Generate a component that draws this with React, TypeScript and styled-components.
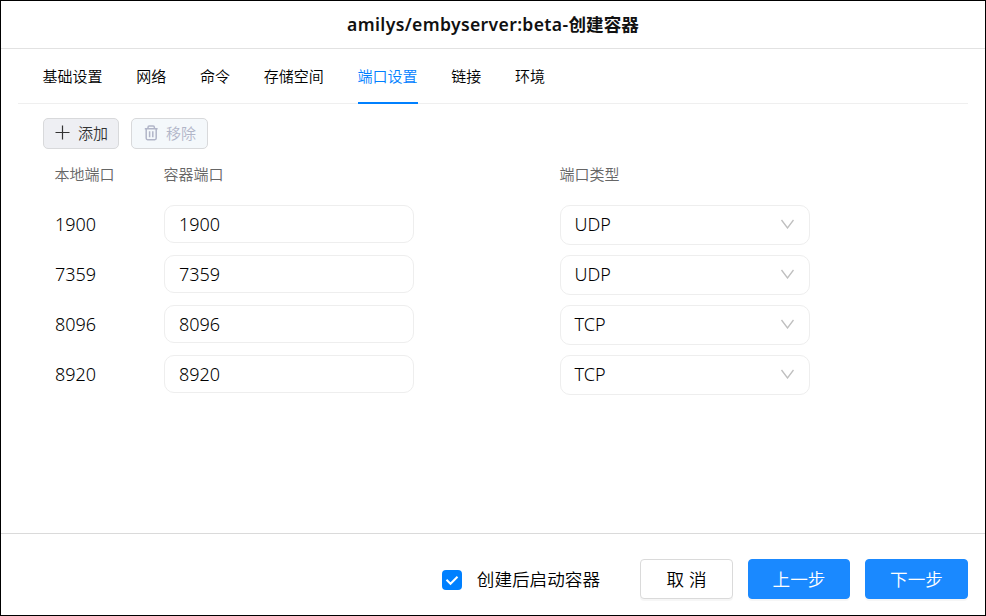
import React from 'react';
import styled, { createGlobalStyle } from 'styled-components';

const GlobalStyle = createGlobalStyle`
  * { box-sizing: border-box; }
  body {
    margin: 0;
    background: #fff;
    color: #000;
    font-family: "Noto Sans", "Noto Sans CJK SC", sans-serif;
  }
  button, input { font-family: inherit; }
`;

const cjk = '"Noto Sans CJK SC", sans-serif';

const Dialog = styled.div`
  width: 986px;
  height: 616px;
  border: 1px solid #000;
  display: flex;
  flex-direction: column;
  background: #fff;
  overflow: hidden;
`;

const Header = styled.header`
  height: 48px;
  flex: none;
  padding-bottom: 2px;
  display: flex;
  align-items: center;
  justify-content: center;
  border-bottom: 1px solid #e2e2e2;
`;

const Title = styled.h1`
  margin: 0;
  font-size: 17.6px;
  line-height: 24px;
  font-weight: 600;
  letter-spacing: 0.35px;
  color: #111;
  white-space: nowrap;
`;

const TitleCjk = styled.span`
  font-family: ${cjk};
  font-weight: 700;
  letter-spacing: 0;
`;

const TabBar = styled.nav`
  height: 55px;
  flex: none;
  margin: 0 17px;
  padding-left: 25px;
  display: flex;
  gap: 33.75px;
  border-bottom: 1px solid #efefef;
`;

const Tab = styled.a<{ $active: boolean }>`
  height: 55px;
  padding-top: 16px;
  font: 350 15px/22px ${cjk};
  white-space: nowrap;
  color: ${(p) => (p.$active ? '#0080ff' : '#000')};
  border-bottom: 2px solid ${(p) => (p.$active ? '#0080ff' : 'transparent')};
`;

const TabLabel = styled.span`
  margin: 0 0.6px 0 -0.6px;
`;

const Content = styled.main`
  flex: 1;
  padding: 14px 42px 0;
`;

const Toolbar = styled.div`
  display: flex;
  gap: 12px;
  height: 31px;
`;

const ToolButton = styled.button<{ $muted?: boolean }>`
  width: ${(p) => (p.$muted ? 77 : 76)}px;
  height: 31px;
  padding: 0 0 2px ${(p) => (p.$muted ? 12 : 11)}px;
  display: flex;
  align-items: center;
  gap: 8px;
  border: 1px solid #d8d9db;
  border-radius: 5px;
  background: ${(p) => (p.$muted ? '#f4f8fb' : '#eeeff3')};
  color: ${(p) => (p.$muted ? '#b1b5c8' : '#333')};
  font: 350 15px/22px ${cjk};
  white-space: nowrap;
  svg { flex: none; }
`;

const PortRow = styled.div`
  display: grid;
  grid-template-columns: 109px 396px 250px;
  height: 50px;
  padding-left: 12px;
  align-items: start;
`;

const HeadRow = styled(PortRow)`
  height: 56px;
  padding-top: 14px;
  font: 350 15px/22px ${cjk};
  text-indent: -0.6px;
  color: #666;
`;

const LocalPort = styled.span`
  font-size: 18px;
  font-weight: 350;
  line-height: 38px;
`;

const PortInput = styled.input`
  width: 250px;
  height: 38px;
  padding: 0 14px 1px;
  border: 1px solid #eee;
  border-radius: 10px;
  background: #fff;
  color: #000;
  font-size: 18px;
  font-weight: 350;
  outline: none;
`;

const TypeSelect = styled.div`
  width: 250px;
  height: 40px;
  padding: 0 15px 2px 13.5px;
  display: flex;
  align-items: center;
  justify-content: space-between;
  border: 1px solid #eee;
  border-radius: 10px;
  font-size: 18px;
  font-weight: 350;
`;

const Footer = styled.footer`
  height: 82px;
  flex: none;
  padding: 25px 17px 0 0;
  display: flex;
  justify-content: flex-end;
  border-top: 1px solid #dadada;
`;

const StartOption = styled.label`
  display: flex;
  align-items: center;
  height: 40px;
  margin: 1px 40px 0 0;
  gap: 15px;
  font: 350 17.6px/26px ${cjk};
  white-space: nowrap;
`;

const StartLabel = styled.span`
  padding-bottom: 2px;
`;

const CheckMark = styled.span`
  width: 20px;
  height: 20px;
  display: flex;
  border-radius: 4px;
  background: #0080ff;
`;

const ActionButton = styled.button<{ $primary?: boolean; $width: number }>`
  width: ${(p) => p.$width}px;
  height: 40px;
  padding: 0 0 1px;
  margin-left: ${(p) => (p.$primary ? 15 : 0)}px;
  border: 1px solid ${(p) => (p.$primary ? '#1a89ff' : '#dadada')};
  border-radius: 4px;
  background: ${(p) => (p.$primary ? '#1a89ff' : '#fff')};
  color: ${(p) => (p.$primary ? '#fff' : '#000')};
  box-shadow: 0 2px 0 rgba(0, 0, 0, 0.035);
  font: 350 17.6px/26px ${cjk};
  word-spacing: 1px;
  white-space: nowrap;
`;

const PlusIcon = () => (
  <svg width="15" height="15" viewBox="0 0 15 15" fill="none" stroke="currentColor" strokeWidth="1.2">
    <path d="M7.5 .5v14M.5 7.5h14" />
  </svg>
);

const TrashIcon = () => (
  <svg width="14" height="16" viewBox="0 0 14 16" fill="none" stroke="currentColor" strokeWidth="1.5">
    <path d="M.8 3.8h12.8M4 3.8V2.4q0-1.3 1.3-1.3h3.8q1.3 0 1.3 1.3v1.4M2.2 3.8v9.5q0 1.4 1.4 1.4h7.2q1.4 0 1.4-1.4V3.8M5.6 6.2v6M8.8 6.2v6" />
  </svg>
);

const ChevronIcon = () => (
  <svg width="14" height="10" viewBox="0 0 14 10" fill="none" stroke="#bfbfbf" strokeWidth="1.3">
    <path d="M1.5 1 7.5 9 13.5 1" />
  </svg>
);

const CheckIcon = () => (
  <svg width="20" height="20" viewBox="0 0 20 20" fill="none" stroke="#fff" strokeWidth="2">
    <path d="m4.5 9.8 4 4 7-7" />
  </svg>
);

const tabs = ['基础设置', '网络', '命令', '存储空间', '端口设置', '链接', '环境'];

const ports = [
  { local: '1900', container: '1900', type: 'UDP' },
  { local: '7359', container: '7359', type: 'UDP' },
  { local: '8096', container: '8096', type: 'TCP' },
  { local: '8920', container: '8920', type: 'TCP' },
];

export default function App() {
  return (
    <>
      <GlobalStyle />
      <Dialog>
        <Header>
          <Title>
            amilys/embyserver:beta-<TitleCjk>创建容器</TitleCjk>
          </Title>
        </Header>
        <TabBar>
          {tabs.map((t) => (
            <Tab key={t} $active={t === '端口设置'}><TabLabel>{t}</TabLabel></Tab>
          ))}
        </TabBar>
        <Content>
          <Toolbar>
            <ToolButton><PlusIcon />添加</ToolButton>
            <ToolButton $muted><TrashIcon />移除</ToolButton>
          </Toolbar>
          <HeadRow>
            <span>本地端口</span>
            <span>容器端口</span>
            <span>端口类型</span>
          </HeadRow>
          {ports.map((p) => (
            <PortRow key={p.local}>
              <LocalPort>{p.local}</LocalPort>
              <PortInput defaultValue={p.container} />
              <TypeSelect>{p.type}<ChevronIcon /></TypeSelect>
            </PortRow>
          ))}
        </Content>
        <Footer>
          <StartOption>
            <CheckMark><CheckIcon /></CheckMark>
            <StartLabel>创建后启动容器</StartLabel>
          </StartOption>
          <ActionButton $width={93}>取 消</ActionButton>
          <ActionButton $primary $width={102}>上一步</ActionButton>
          <ActionButton $primary $width={103}>下一步</ActionButton>
        </Footer>
      </Dialog>
    </>
  );
}
